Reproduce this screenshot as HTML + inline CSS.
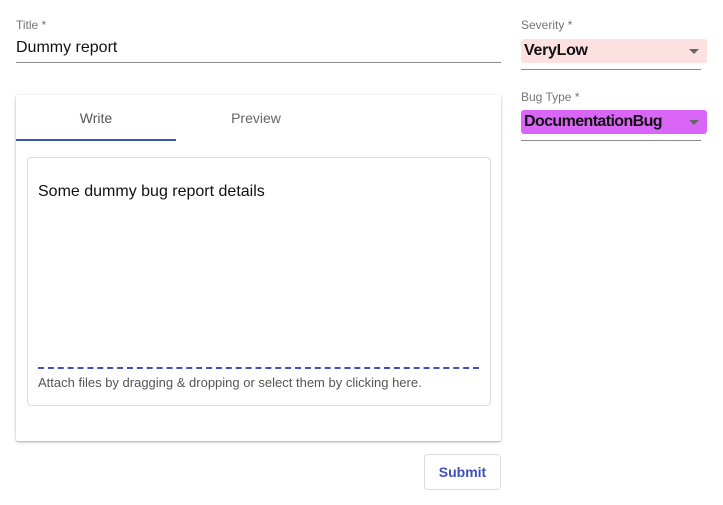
<!DOCTYPE html>
<html><head><style>
body{margin:0;width:723px;height:505px;background:#fff;font-family:"Liberation Sans",sans-serif;position:relative;overflow:hidden}
.a{position:absolute}
.lbl{font-size:12px;color:#757575}
.arr{position:absolute;right:8px;top:10px;width:0;height:0;border-left:5px solid transparent;border-right:5px solid transparent;border-top:5px solid #666}
</style></head><body>
<div class="a lbl" style="left:16px;top:18px">Title *</div>
<div class="a" style="left:16px;top:39px;font-size:16px;color:#111">Dummy report</div>
<div class="a" style="left:16px;top:62px;width:485px;height:1px;background:#8a8a8a"></div>

<div class="a" style="left:16px;top:95px;width:485px;height:346px;background:#fff;box-shadow:0 1px 3px rgba(0,0,0,.25),0 1px 1px rgba(0,0,0,.12);border-radius:2px">
 <div class="a" style="left:0;top:15px;width:160px;text-align:center;font-size:14px;color:#555">Write</div>
 <div class="a" style="left:160px;top:15px;width:160px;text-align:center;font-size:14px;color:#666">Preview</div>
 <div class="a" style="left:0;top:44px;width:160px;height:2px;background:#3f51b5"></div>
 <div class="a" style="left:11px;top:62px;width:462px;height:247px;border:1px solid #ddd;border-radius:4px">
  <div class="a" style="left:10px;top:25px;font-size:16px;color:#111">Some dummy bug report details</div>
  <div class="a" style="left:10px;top:209px;width:441px;border-top:2px dashed #3f51b5"></div>
  <div class="a" style="left:10px;top:217px;font-size:13px;color:#555">Attach files by dragging &amp; dropping or select them by clicking here.</div>
 </div>
</div>

<div class="a" style="left:424px;top:454px;width:75px;height:34px;border:1px solid #ddd;border-radius:4px;text-align:center;line-height:34px;font-size:14px;font-weight:bold;color:#3f51b5">Submit</div>

<div class="a lbl" style="left:521px;top:18px">Severity *</div>
<div class="a" style="left:521px;top:39px;width:186px;height:24px;background:#fde0e0;border-radius:3px">
 <div class="a" style="left:3px;top:3px;font-size:16px;font-weight:bold;color:#111;letter-spacing:-0.3px">VeryLow</div><div class="arr"></div></div>
<div class="a" style="left:521px;top:69px;width:180px;height:1px;background:#8a8a8a"></div>

<div class="a lbl" style="left:521px;top:90px">Bug Type *</div>
<div class="a" style="left:521px;top:110px;width:186px;height:24px;background:#d966f7;border-radius:3px">
 <div class="a" style="left:3px;top:3px;font-size:16px;font-weight:bold;color:#111;letter-spacing:-0.6px">DocumentationBug</div><div class="arr"></div></div>
<div class="a" style="left:521px;top:140px;width:180px;height:1px;background:#8a8a8a"></div>
</body></html>
